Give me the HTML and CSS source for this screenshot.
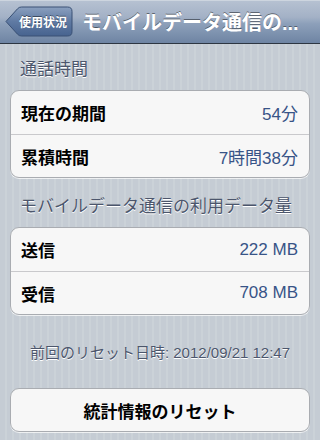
FILE: index.html
```html
<!DOCTYPE html>
<html lang="ja">
<head>
<meta charset="utf-8">
<link rel="stylesheet" href="styles.css">
</head>
<body>
<div class="navbar">
  <div class="back">
    <svg class="back-shape" width="68" height="31" viewBox="0 0 68 31">
      <defs>
        <linearGradient id="bg" x1="0" y1="0" x2="0" y2="1">
          <stop offset="0" stop-color="#8ba0bf"/>
          <stop offset="0.5" stop-color="#5f7aa3"/>
          <stop offset="1" stop-color="#47638f"/>
        </linearGradient>
      </defs>
      <path d="M1 15.5 L12.5 2.8 Q14 1 16.5 1 L62.5 1 Q67 1 67 5.5 L67 25.5 Q67 30 62.5 30 L16.5 30 Q14 30 12.5 28.2 Z" fill="url(#bg)" stroke="#3a5175" stroke-width="1"/>
    </svg>
    <span class="back-label">使用状況</span>
  </div>
  <div class="title">モバイルデータ通信の...</div>
</div>
<div class="content">
  <div class="section-header first">通話時間</div>
  <div class="group">
    <div class="row"><span class="label">現在の期間</span><span class="value">54分</span></div>
    <div class="row"><span class="label">累積時間</span><span class="value">7時間38分</span></div>
  </div>
  <div class="section-header">モバイルデータ通信の利用データ量</div>
  <div class="group">
    <div class="row"><span class="label">送信</span><span class="value">222 MB</span></div>
    <div class="row"><span class="label">受信</span><span class="value">708 MB</span></div>
  </div>
  <div class="footer">前回のリセット日時: 2012/09/21 12:47</div>
  <div class="button">統計情報のリセット</div>
</div>
</body>
</html>
```
FILE: styles.css
```css
html, body {
  margin: 0;
  padding: 0;
}
body {
  width: 320px;
  height: 440px;
  overflow: hidden;
  font-family: "Liberation Sans", "Noto Sans CJK JP", sans-serif;
  background: repeating-linear-gradient(90deg, #c5ccd4 0px, #c5ccd4 5px, #cbd2d8 5px, #cbd2d8 7px);
}
.navbar {
  height: 43px;
  border-bottom: 1px solid #2d3642;
  background: linear-gradient(#b7c2d2 0%, #a3b1c6 40%, #8da0ba 55%, #6e84a3 100%);
  box-shadow: inset 0 1px 0 #cdd5df;
  display: flex;
  align-items: center;
  padding-left: 5px;
}
.back {
  position: relative;
  width: 68px;
  height: 31px;
  flex: none;
  display: flex;
  align-items: center;
  justify-content: flex-end;
}
.back-shape {
  position: absolute;
  left: 0;
  top: 0;
}
.back-label {
  position: relative;
  color: #fff;
  font-weight: bold;
  font-size: 12px;
  padding-right: 6px;
  text-shadow: 0 -1px 0 rgba(0,0,0,0.45);
}
.title {
  margin-left: 9px;
  color: #fff;
  font-weight: bold;
  font-size: 20px;
  white-space: nowrap;
  text-shadow: 0 -1px 0 rgba(0,0,0,0.45);
}
.content {
  padding: 0 10px;
}
.section-header {
  padding: 18px 10px 9px;
  font-size: 17px;
  line-height: 22px;
  color: #4c566c;
  text-shadow: 0 1px 0 #fff;
}
.section-header.first {
  padding-top: 15px;
}
.group {
  background: #f7f7f7;
  border: 1px solid #a9acb1;
  border-radius: 9px;
  box-shadow: 0 1px 0 rgba(255,255,255,0.7);
}
.row {
  box-sizing: border-box;
  height: 43px;
  display: flex;
  align-items: center;
  justify-content: space-between;
  padding: 0 11px 0 10px;
}
.row + .row {
  border-top: 1px solid #c9c9cc;
}
.label {
  font-weight: bold;
  font-size: 17px;
  color: #000;
}
.value {
  font-size: 17px;
  color: #385487;
}
.footer {
  margin-top: 29px;
  text-align: center;
  font-size: 15px;
  line-height: 17px;
  color: #4c566c;
  text-shadow: 0 1px 0 #fff;
}
.button {
  margin-top: 27px;
  height: 42px;
  background: #f7f7f7;
  border: 1px solid #a9acb1;
  border-radius: 9px;
  box-shadow: 0 1px 0 rgba(255,255,255,0.7);
  display: flex;
  align-items: center;
  justify-content: center;
  font-weight: bold;
  font-size: 17px;
  color: #000;
}
```
